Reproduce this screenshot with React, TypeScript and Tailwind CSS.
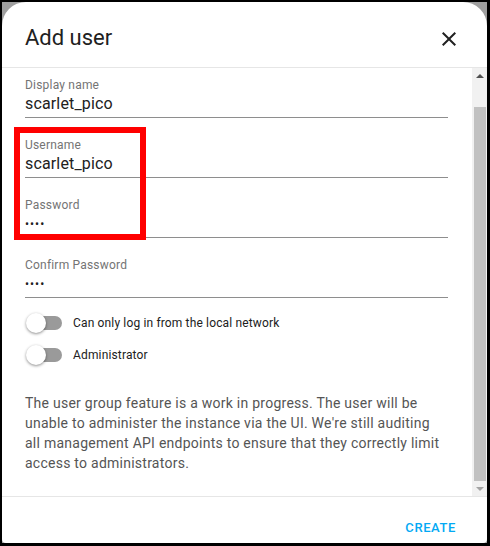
import React from "react";

type Field = { label: string; value: string; secret?: boolean };

const fields: Field[] = [
  { label: "Display name", value: "scarlet_pico" },
  { label: "Username", value: "scarlet_pico" },
  { label: "Password", value: "••••", secret: true },
  { label: "Confirm Password", value: "••••", secret: true },
];

function Toggle({ label }: { label: string }) {
  return (
    <div className="flex items-center h-8">
      <div className="relative w-[34px] h-[14px] ml-[3px] rounded-full bg-[#9a9a9a]">
        <div className="absolute -left-[2px] -top-[3px] w-5 h-5 rounded-full bg-white shadow-[0_1px_3px_rgba(0,0,0,0.45)]" />
      </div>
      <span className="ml-[11px] text-[12px] tracking-[0.15px] text-[#212121]">{label}</span>
    </div>
  );
}

export default function App() {
  return (
    <div className="relative w-[490px] h-[546px] bg-black pl-[2px] pt-[2px] pr-[3px] pb-[3px] font-['Roboto',sans-serif]">
      <div className="w-full h-full bg-[#9f9f9f]">
        <div className="flex flex-col w-full h-full bg-white rounded-t-[24px] rounded-b-[4px] overflow-hidden">
          {/* Header */}
          <div className="flex justify-between items-start h-[66px] pl-[23px] pr-[26px] pt-[22px] border-b border-[#e6e6e6]">
            <h2 className="text-[22px] leading-7 text-[#212121]">Add user</h2>
            <svg viewBox="0 0 24 24" className="w-6 h-6 mt-[3px]" fill="#212121">
              <path d="M19 6.41L17.59 5 12 10.59 6.41 5 5 6.41 10.59 12 5 17.59 6.41 19 12 13.41 17.59 19 19 17.59 13.41 12z" />
            </svg>
          </div>

          {/* Content + scrollbar */}
          <div className="flex h-[428px]">
            <div className="flex-1 pl-[23px] pr-[24px] pt-[9px]">
              {fields.map((f) => (
                <div key={f.label} className="mb-[19px] pb-[3px] border-b border-[#8e8e8e]">
                  <div className="text-[12px] leading-4 tracking-[0.2px] text-[#747474]">{f.label}</div>
                  <div
                    className={`mt-px leading-5 text-[#212121] ${
                      f.secret ? "text-[12px] tracking-[1px]" : "text-[16px] tracking-[0.15px]"
                    }`}
                  >
                    {f.value}
                  </div>
                </div>
              ))}
              <div className="-mt-[10px]">
                <Toggle label="Can only log in from the local network" />
                <Toggle label="Administrator" />
              </div>
              <p className="mt-[22px] text-[14px] leading-5 tracking-[0.25px] text-[#555555]">
                The user group feature is a work in progress. The user will be unable to
                administer the instance via the UI. We're still auditing all management API
                endpoints to ensure that they correctly limit access to administrators.
              </p>
            </div>

            {/* Scrollbar */}
            <div className="flex flex-col w-[15px] bg-[#f1f1f1]">
              <div className="flex items-center justify-center h-[15px]">
                <div className="w-0 h-0 border-l-[4px] border-r-[4px] border-b-[4px] border-l-transparent border-r-transparent border-b-[#505050]" />
              </div>
              <div className="flex-1 flex flex-col justify-end">
                <div className="h-[374px] ml-[2px] mr-px bg-[#c1c1c1]" />
              </div>
              <div className="flex items-center justify-center h-[15px]">
                <div className="w-0 h-0 border-l-[4px] border-r-[4px] border-t-[4px] border-l-transparent border-r-transparent border-t-[#a3a3a3]" />
              </div>
            </div>
          </div>

          {/* Footer */}
          <div className="flex-1 flex justify-end items-start pt-[23px] pr-[31px] border-t border-[#e6e6e6]">
            <button className="text-[13px] leading-4 font-medium tracking-[0.6px] text-[#03a9f4]">
              CREATE
            </button>
          </div>
        </div>
      </div>

      {/* Highlight box */}
      <div className="absolute left-[14px] top-[127px] w-[132px] h-[113px] border-[6px] border-[#ff0000]" />
    </div>
  );
}
